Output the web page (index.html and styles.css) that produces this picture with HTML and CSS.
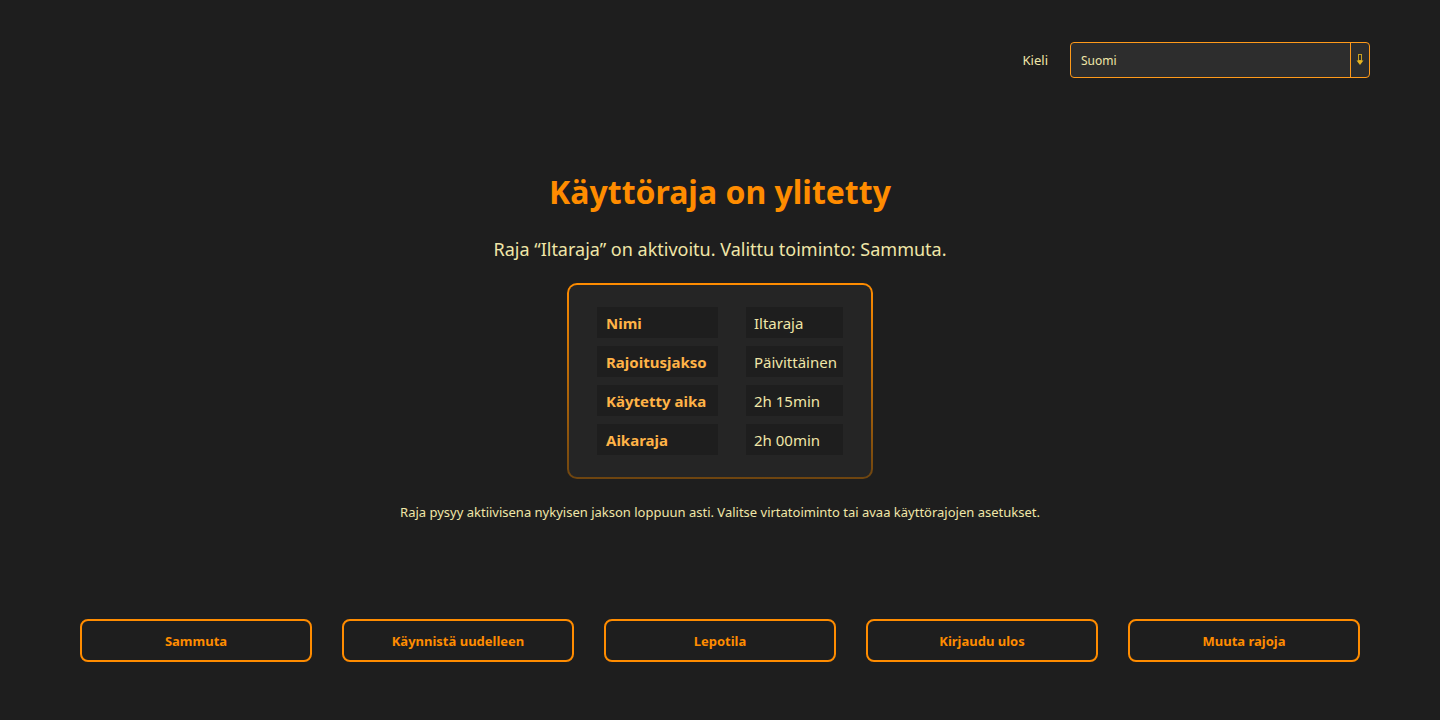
FILE: index.html
```html
<!DOCTYPE html>
<html lang="fi">
<head>
    <meta charset="UTF-8">
    <meta name="viewport" content="width=device-width, initial-scale=1.0">
    <title>Käyttöraja on ylitetty</title>
    <link rel="stylesheet" href="styles.css">
</head>
<body>
    <div class="topbar">
        <label class="lang-label" for="lang">Kieli</label>
        <div class="select" id="lang">
            <span class="select-value">Suomi</span>
            <span class="select-arrow">
                <svg width="8" height="12" viewBox="0 0 8 12">
                    <rect x="2.5" y="0.5" width="3" height="6" fill="none" stroke="#c8a020" stroke-width="1"/>
                    <path d="M0.5 6.5 L7.5 6.5 L4 11 Z" fill="#e6b422"/>
                </svg>
            </span>
        </div>
    </div>

    <main class="content">
        <h1 class="title">Käyttöraja on ylitetty</h1>
        <p class="subtitle">Raja “Iltaraja” on aktivoitu. Valittu toiminto: Sammuta.</p>

        <div class="card">
            <div class="cell key">Nimi</div>
            <div class="cell val">Iltaraja</div>
            <div class="cell key">Rajoitusjakso</div>
            <div class="cell val">Päivittäinen</div>
            <div class="cell key">Käytetty aika</div>
            <div class="cell val">2h 15min</div>
            <div class="cell key">Aikaraja</div>
            <div class="cell val">2h 00min</div>
        </div>

        <p class="note">Raja pysyy aktiivisena nykyisen jakson loppuun asti. Valitse virtatoiminto tai avaa käyttörajojen asetukset.</p>
    </main>

    <div class="actions">
        <button class="action-btn">Sammuta</button>
        <button class="action-btn">Käynnistä uudelleen</button>
        <button class="action-btn">Lepotila</button>
        <button class="action-btn">Kirjaudu ulos</button>
        <button class="action-btn">Muuta rajoja</button>
    </div>
</body>
</html>
```

FILE: styles.css
```css
html, body {
    height: 100%;
}
body {
    margin: 0;
    background-color: #1e1e1e;
    font-family: "Noto Sans", "Open Sans", sans-serif;
    color: #f0e6a8;
    display: flex;
    flex-direction: column;
    overflow: hidden;
}
.topbar {
    display: flex;
    justify-content: flex-end;
    align-items: center;
    gap: 22px;
    padding: 42px 70px 0 0;
}
.lang-label {
    font-size: 13px;
    color: #f0e6a8;
}
.select {
    width: 300px;
    height: 36px;
    box-sizing: border-box;
    border: 1px solid #ff9a1a;
    border-radius: 4px;
    background-color: #2d2d2d;
    display: flex;
    align-items: center;
}
.select-value {
    flex: 1;
    padding-left: 10px;
    font-size: 12px;
    color: #f0e6a8;
}
.select-arrow {
    width: 18px;
    height: 100%;
    border-left: 1px solid #ff9a1a;
    display: flex;
    align-items: center;
    justify-content: center;
}
.content {
    display: flex;
    flex-direction: column;
    align-items: center;
}
.title {
    margin: 92px 0 0;
    font-size: 32px;
    line-height: 44px;
    font-weight: bold;
    color: #ff8c00;
}
.subtitle {
    margin: 23px 0 0;
    font-size: 18px;
    line-height: 24px;
}
.card {
    margin-top: 22px;
    box-sizing: border-box;
    width: 306px;
    padding: 22px 28px 22px;
    border: 2px solid transparent;
    border-radius: 10px;
    background:
        linear-gradient(#252525, #252525) padding-box,
        linear-gradient(#ff8c00, #6e4510) border-box;
    display: grid;
    grid-template-columns: 121px 97px;
    column-gap: 28px;
    row-gap: 8px;
}
.cell {
    height: 31px;
    display: flex;
    align-items: center;
    padding-left: 9px;
    background-color: #1e1e1e;
    font-size: 15px;
}
.key {
    color: #ffb347;
    font-weight: bold;
}
.val {
    padding-left: 8px;
    color: #f0e6a8;
}
.note {
    margin: 24px 0 0;
    font-size: 13px;
    line-height: 18px;
}
.actions {
    margin-top: auto;
    margin-bottom: 58px;
    padding: 0 80px;
    display: flex;
    gap: 30px;
}
.action-btn {
    flex: 1;
    height: 43px;
    background: transparent;
    border: 2px solid #ff8c00;
    border-radius: 8px;
    color: #ff8c00;
    font-family: inherit;
    font-size: 13px;
    font-weight: bold;
    cursor: pointer;
}
.action-btn:hover {
    background-color: #2a2218;
}
```
